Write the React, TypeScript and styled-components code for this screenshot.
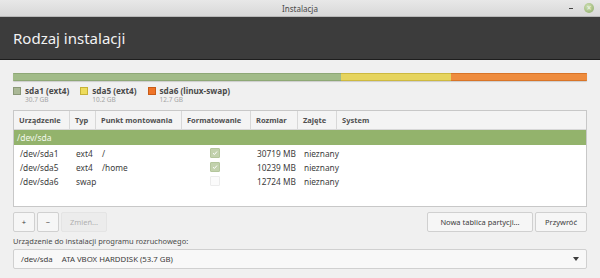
import React from 'react';
import styled, { createGlobalStyle } from 'styled-components';

const GlobalStyle = createGlobalStyle`
  html, body {
    margin: 0;
    padding: 0;
    background: #f0f0f0;
  }
  body {
    font-family: 'Noto Sans', 'DejaVu Sans', sans-serif;
    color: #3c3c3c;
  }
`;

const Window = styled.div`
  width: 600px;
  height: 278px;
  display: flex;
  flex-direction: column;
  background: #f0f0f0;
  overflow: hidden;
`;

const TitleBar = styled.div`
  height: 16px;
  display: flex;
  align-items: center;
  justify-content: center;
  position: relative;
  background: linear-gradient(#e8e8e8, #d8d8d8);
  border-bottom: 1px solid #b8b8b8;
  font-size: 8px;
  color: #4a4a4a;
`;

const TitleControls = styled.div`
  position: absolute;
  right: 6px;
  top: 0;
  height: 16px;
  display: flex;
  align-items: center;
  gap: 11px;
`;

const MinButton = styled.span`
  width: 4px;
  height: 1px;
  background: #444;
`;

const CloseButton = styled.span`
  width: 10px;
  height: 10px;
  border-radius: 50%;
  background: radial-gradient(circle at 40% 35%, #cfe0b4, #8aaa64);
  display: flex;
  align-items: center;
  justify-content: center;
  font-size: 8px;
  line-height: 1;
  color: #f2f7ea;
`;

const Header = styled.div`
  height: 42px;
  background: #3c3c3c;
  border-bottom: 1px solid #1e1e1e;
  display: flex;
  align-items: center;
  padding: 0 13px;
  font-size: 15px;
  color: #f2f2f2;
`;

const Body = styled.div`
  flex: 1;
  display: flex;
  flex-direction: column;
  padding: 13px 13px 0;
`;

const PartBar = styled.div`
  height: 8px;
  display: flex;
  border-radius: 1px;
  overflow: hidden;
  box-shadow: 0 1px 1px rgba(0, 0, 0, 0.15);
`;

const PartSegment = styled.div<{ $color: string; $edge: string }>`
  background: ${(p) => p.$color};
  border-top: 1px solid ${(p) => p.$edge};
  border-bottom: 1px solid ${(p) => p.$edge};
`;

const Legend = styled.div`
  display: flex;
  gap: 11px;
  margin-top: 5px;
`;

const LegendItem = styled.div`
  display: grid;
  grid-template-columns: 8px auto;
  column-gap: 4px;
  align-items: center;
`;

const Swatch = styled.span<{ $color: string; $edge: string }>`
  background: ${(p) => p.$color};
  border: 1px solid ${(p) => p.$edge};
  box-sizing: border-box;
  width: 8px;
  height: 8px;
`;

const LegendName = styled.span`
  font-size: 8.2px;
  font-weight: bold;
  color: #4a4a4a;
  line-height: 10px;
`;

const LegendSize = styled.span`
  grid-column: 2;
  font-size: 6.5px;
  color: #a4a4a4;
  line-height: 8px;
`;

const Table = styled.div`
  margin-top: 6px;
  height: 97px;
  box-sizing: border-box;
  background: #fff;
  border: 1px solid #c8c8c8;
  display: flex;
  flex-direction: column;
`;

const cols = '56px 26px 86px 69px 47px 39px 1fr';

const HeadRow = styled.div`
  display: grid;
  grid-template-columns: ${cols};
  height: 18px;
  background: #f4f4f4;
  border-bottom: 1px solid #d8d8d8;
`;

const HeadCell = styled.div`
  font-size: 7.5px;
  font-weight: bold;
  color: #505050;
  display: flex;
  align-items: center;
  padding-left: 5px;
  border-right: 1px solid #d8d8d8;
  white-space: nowrap;
  &:last-child {
    border-right: none;
  }
`;

const DiskRow = styled.div`
  height: 15px;
  background: #93b36c;
  color: #f4f8ee;
  font-size: 8.5px;
  display: flex;
  align-items: center;
  padding-left: 3px;
`;

const Rows = styled.div`
  padding-top: 1px;
`;

const Row = styled.div`
  display: grid;
  grid-template-columns: ${cols};
  height: 14px;
  align-items: center;
  font-size: 8.3px;
  color: #3c3c3c;
`;

const Cell = styled.div`
  padding-left: 6px;
  white-space: nowrap;
  display: flex;
`;

const Check = styled.span<{ $on: boolean }>`
  width: 8px;
  height: 8px;
  border-radius: 1px;
  background: ${(p) => (p.$on ? '#c2d1ad' : '#fbfbfb')};
  border: 1px solid ${(p) => (p.$on ? '#b4c69c' : '#ececec')};
  display: flex;
  align-items: center;
  justify-content: center;
  margin-left: 22px;
`;

const Toolbar = styled.div`
  display: flex;
  align-items: center;
  margin-top: 5px;
  gap: 2px;
`;

const Button = styled.div<{ $w: number; $dim?: boolean }>`
  width: ${(p) => p.$w}px;
  height: 20px;
  box-sizing: border-box;
  background: ${(p) => (p.$dim ? '#ececec' : '#f6f6f6')};
  border: 1px solid ${(p) => (p.$dim ? '#e4e4e4' : '#d0d0d0')};
  border-radius: 2px;
  display: flex;
  align-items: center;
  justify-content: center;
  font-size: 7.5px;
  color: ${(p) => (p.$dim ? '#b0b0b0' : '#3c3c3c')};
`;

const Spacer = styled.div`
  flex: 1;
`;

const Label = styled.div`
  margin-top: 4px;
  font-size: 7.5px;
  line-height: 10px;
  color: #4a4a4a;
`;

const Combo = styled.div`
  margin-top: 3px;
  height: 20px;
  box-sizing: border-box;
  background: #f8f8f8;
  border: 1px solid #d0d0d0;
  border-radius: 2px;
  display: flex;
  align-items: center;
  padding: 0 7px;
  font-size: 7.8px;
  color: #3c3c3c;
  gap: 9px;
`;

const Arrow = styled.span`
  margin-left: auto;
  width: 0;
  height: 0;
  border-left: 3px solid transparent;
  border-right: 3px solid transparent;
  border-top: 4px solid #3c3c3c;
`;

const partitions = [
  { name: 'sda1 (ext4)', size: '30.7 GB', color: '#aab896', edge: '#8a9878' },
  { name: 'sda5 (ext4)', size: '10.2 GB', color: '#eedc5c', edge: '#c6b238' },
  { name: 'sda6 (linux-swap)', size: '12.7 GB', color: '#ef7428', edge: '#c85c18' },
];

const rows = [
  { dev: '/dev/sda1', type: 'ext4', mount: '/', fmt: true, size: '30719 MB' },
  { dev: '/dev/sda5', type: 'ext4', mount: '/home', fmt: true, size: '10239 MB' },
  { dev: '/dev/sda6', type: 'swap', mount: '', fmt: false, size: '12724 MB' },
];

const App = () => {
  return (
    <Window>
      <GlobalStyle />
      <TitleBar>
        Instalacja
        <TitleControls>
          <MinButton />
          <CloseButton>×</CloseButton>
        </TitleControls>
      </TitleBar>
      <Header>Rodzaj instalacji</Header>
      <Body>
        <PartBar>
          <PartSegment style={{ width: 328 }} $color="#a1bb88" $edge="#8ea876" />
          <PartSegment style={{ width: 110 }} $color="#e6d45e" $edge="#cdb940" />
          <PartSegment style={{ flex: 1 }} $color="#ee8c3e" $edge="#d87428" />
        </PartBar>
        <Legend>
          {partitions.map((p) => (
            <LegendItem key={p.name}>
              <Swatch $color={p.color} $edge={p.edge} />
              <LegendName>{p.name}</LegendName>
              <LegendSize>{p.size}</LegendSize>
            </LegendItem>
          ))}
        </Legend>
        <Table>
          <HeadRow>
            <HeadCell>Urządzenie</HeadCell>
            <HeadCell>Typ</HeadCell>
            <HeadCell>Punkt montowania</HeadCell>
            <HeadCell>Formatowanie</HeadCell>
            <HeadCell>Rozmiar</HeadCell>
            <HeadCell>Zajęte</HeadCell>
            <HeadCell>System</HeadCell>
          </HeadRow>
          <DiskRow>/dev/sda</DiskRow>
          <Rows>
            {rows.map((r) => (
              <Row key={r.dev}>
                <Cell>{r.dev}</Cell>
                <Cell>{r.type}</Cell>
                <Cell>{r.mount}</Cell>
                <Cell>
                  <Check $on={r.fmt}>
                    {r.fmt && (
                      <svg width="6" height="6" viewBox="0 0 6 6">
                        <path d="M1 3.2 L2.4 4.5 L5 1.5" stroke="#fff" strokeWidth="1" fill="none" />
                      </svg>
                    )}
                  </Check>
                </Cell>
                <Cell>{r.size}</Cell>
                <Cell>nieznany</Cell>
                <Cell />
              </Row>
            ))}
          </Rows>
        </Table>
        <Toolbar>
          <Button $w={22}>+</Button>
          <Button $w={22}>−</Button>
          <Button $w={46} $dim>Zmień...</Button>
          <Spacer />
          <Button $w={106}>Nowa tablica partycji...</Button>
          <Button $w={52}>Przywróć</Button>
        </Toolbar>
        <Label>Urządzenie do instalacji programu rozruchowego:</Label>
        <Combo>
          <span>/dev/sda</span>
          <span>ATA VBOX HARDDISK (53.7 GB)</span>
          <Arrow />
        </Combo>
      </Body>
    </Window>
  );
};

export default App;
